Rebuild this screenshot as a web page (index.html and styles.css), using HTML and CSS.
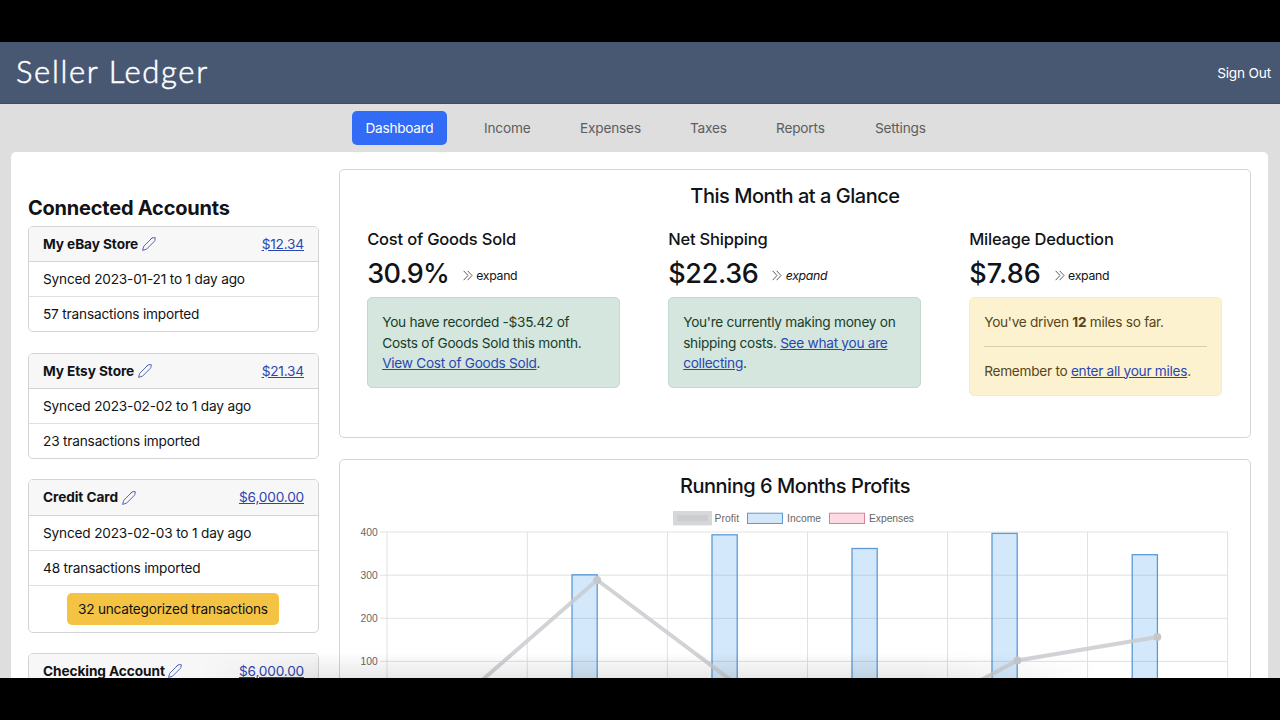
FILE: index.html
```html
<!DOCTYPE html>
<html lang="en">
<head>
<meta charset="utf-8">
<title>Seller Ledger</title>
<link rel="stylesheet" href="styles.css">
</head>
<body>
<svg class="defs" width="0" height="0">
  <symbol id="pen" viewBox="0 0 14 14">
    <path d="M.6 13.4 1.7 9.3 9.6 1.4Q10.2.7 11.2.7H13.3L13 2.8Q12.9 3.8 12.3 4.4L4.5 12.2ZM8 2.8 10.4.8"/>
  </symbol>
  <symbol id="chev" viewBox="0 0 10 11">
    <path d="M.6.8 5 5.5.6 10.2M4.6.8 9 5.5 4.6 10.2"/>
  </symbol>
</svg>
<div class="screen">
  <header class="topbar"><a class="brand">Seller Ledger</a><a class="signout">Sign Out</a></header>
  <nav class="nav">
    <a class="tab active">Dashboard</a><a class="tab t2">Income</a><a class="tab t3">Expenses</a><a class="tab t4">Taxes</a><a class="tab t5">Reports</a><a class="tab t6">Settings</a>
  </nav>
  <main class="page">
    <aside class="side">
      <h2 class="side-title">Connected Accounts</h2>
      <section class="card">
        <div class="card-head"><b>My eBay Store</b><svg class="pen"><use href="#pen"/></svg><a class="amount">$12.34</a></div>
        <div class="row">Synced 2023-01-21 to 1 day ago</div>
        <div class="row">57 transactions imported</div>
      </section>
      <section class="card">
        <div class="card-head"><b>My Etsy Store</b><svg class="pen"><use href="#pen"/></svg><a class="amount">$21.34</a></div>
        <div class="row">Synced 2023-02-02 to 1 day ago</div>
        <div class="row">23 transactions imported</div>
      </section>
      <section class="card">
        <div class="card-head"><b>Credit Card</b><svg class="pen"><use href="#pen"/></svg><a class="amount">$6,000.00</a></div>
        <div class="row">Synced 2023-02-03 to 1 day ago</div>
        <div class="row">48 transactions imported</div>
        <div class="row action"><span class="button">32 uncategorized transactions</span></div>
      </section>
      <section class="card">
        <div class="card-head"><b>Checking Account</b><svg class="pen"><use href="#pen"/></svg><a class="amount">$6,000.00</a></div>
        <div class="row">&nbsp;</div>
      </section>
    </aside>
    <div class="content">
      <section class="panel glance">
        <h3 class="panel-title">This Month at a Glance</h3>
        <div class="stats">
          <div class="stat">
            <h4 class="stat-name">Cost of Goods Sold</h4>
            <div class="stat-line"><span class="value tight">30.9%</span><svg class="chev"><use href="#chev"/></svg><span class="expand">expand</span></div>
            <div class="alert green">You have recorded -$35.42 of<br>Costs of Goods Sold this month.<br><a>View Cost of Goods Sold</a>.</div>
          </div>
          <div class="stat">
            <h4 class="stat-name">Net Shipping</h4>
            <div class="stat-line"><span class="value">$22.36</span><svg class="chev"><use href="#chev"/></svg><span class="expand italic">expand</span></div>
            <div class="alert green">You're currently making money on<br>shipping costs. <a>See what you are<br>collecting</a>.</div>
          </div>
          <div class="stat">
            <h4 class="stat-name">Mileage Deduction</h4>
            <div class="stat-line"><span class="value loose">$7.86</span><svg class="chev"><use href="#chev"/></svg><span class="expand">expand</span></div>
            <div class="alert yellow">You've driven <b>12</b> miles so far.<hr>Remember to <a>enter all your miles</a>.</div>
          </div>
        </div>
      </section>
      <section class="panel profits">
        <h3 class="panel-title">Running 6 Months Profits</h3>
        <svg class="chart" viewBox="340 505 910 185">
          <g class="grid">
            <path d="M380 532H1228M380 575.2H1228M380 618.3H1228M380 661.4H1228"/>
            <path d="M387 532V690M527.3 532V690M667.4 532V690M807.5 532V690M947.5 532V690M1087.5 532V690M1227.6 532V690"/>
          </g>
          <g class="bars">
            <rect x="572" y="574.8" width="25.2" height="130"/>
            <rect x="712" y="534.8" width="25.2" height="170"/>
            <rect x="852" y="548.5" width="25.2" height="150"/>
            <rect x="992" y="533.4" width="25.2" height="170"/>
            <rect x="1132.2" y="554.7" width="25.2" height="150"/>
          </g>
          <polyline class="line" points="457,702 597.2,580 737.3,685 877.3,736 1017.3,660.5 1157.4,637"/>
          <g class="dots"><circle cx="597.2" cy="580" r="3.6"/><circle cx="1017.3" cy="660.5" r="3.6"/><circle cx="1157.4" cy="637" r="3.6"/></g>
          <rect class="key profit" x="675" y="513" width="35" height="10.4"/>
          <rect class="key income" x="747.5" y="513.2" width="35" height="10.3"/>
          <rect class="key expense" x="829.5" y="513.2" width="35" height="10.3"/>
          <g class="label">
            <text x="714.5" y="522" textLength="24.5">Profit</text>
            <text x="787" y="522" textLength="34">Income</text>
            <text x="869" y="522" textLength="45">Expenses</text>
            <text x="360.5" y="535.6" textLength="17.2">400</text>
            <text x="360.5" y="578.7" textLength="17.2">300</text>
            <text x="360.5" y="621.8" textLength="17.2">200</text>
            <text x="360.5" y="664.9" textLength="17.2">100</text>
          </g>
        </svg>
      </section>
    </div>
  </main>
  <div class="shade"></div>
</div>
</body>
</html>
```
FILE: styles.css
```css
* { box-sizing: border-box; }
body { margin: 0; background: #000; height: 720px; overflow: hidden; padding-top: 42px; font-family: Inter, sans-serif; font-size: 13.67px; line-height: 20.5px; letter-spacing: -.19px; color: #111316; }
.defs { position: absolute; }
.screen { height: 636px; overflow: hidden; position: relative; background: #dedede; }
.topbar { height: 62px; background: #485873; border-bottom: 1px solid #3d4c68; display: flex; align-items: center; justify-content: space-between; padding: 0 9px 0 16px; color: #fff; }
.brand { font: 300 31px/40px Lato, sans-serif; letter-spacing: 1.65px; -webkit-text-stroke: .55px #fff; padding-bottom: 4px; }
.signout { padding-top: 1px; }
.nav { height: 48px; display: flex; align-items: center; padding-left: 352px; color: #5d5d5d; }
.tab { white-space: nowrap; }
.active { background: #326bf6; color: #fff; width: 95px; height: 34px; line-height: 34px; text-align: center; border-radius: 5px; letter-spacing: -.28px; }
.t2 { margin-left: 37px; width: 96px; }
.t3 { width: 110px; }
.t4 { width: 86px; }
.t5 { width: 99px; }
.page { margin: 0 12px 0 11px; height: 700px; background: #fff; border-radius: 5px; display: flex; padding: 17px 17px 0; }
.side { width: 291px; margin-right: 20px; flex: none; }
.side-title { margin: 27px 0 6px; font-size: 20px; line-height: 24px; font-weight: 700; letter-spacing: -.22px; }
.card { border: 1px solid #d3d4d5; border-radius: 5px; margin-bottom: 20.3px; overflow: hidden; }
.card-head { height: 34.4px; background: #f7f7f7; padding: 0 14px; display: flex; align-items: center; }
.card-head b { font-weight: 650; letter-spacing: -.08px; }
.pen { width: 14px; height: 14px; margin-left: 3.5px; fill: none; stroke: #4356ad; stroke-width: .9; }
.amount { margin-left: auto; }
a.amount, .alert a { color: #2b46b0; text-decoration: underline; }
.row { height: 35px; border-top: 1px solid #d3d4d5; padding: 6.8px 14px; white-space: nowrap; }
.row + .row { border-color: #e0e0e1; }
.action { height: 47px; text-align: center; padding: 7px 14px; }
.button { display: block; width: 212px; height: 32.5px; margin: 0 auto; line-height: 32px; background: #f5c344; border-radius: 5px; color: #111; letter-spacing: -.24px; position: relative; left: -.6px; }
.content { width: 912px; flex: none; }
.panel { border: 1px solid #d3d4d5; border-radius: 5px; }
.glance { height: 269px; margin-bottom: 20.5px; padding-top: 14px; }
.profits { height: 400px; padding-top: 14px; }
.panel-title { margin: 0; text-align: center; font-size: 20px; line-height: 25px; font-weight: 500; letter-spacing: -.47px; }
.stats { display: flex; gap: 48px; padding: 20px 0 0 27.2px; }
.stat { width: 253px; flex: none; white-space: nowrap; }
.stat-name { margin: 0; font-size: 16.5px; line-height: 21px; font-weight: 500; letter-spacing: -.2px; }
.stat-line { display: flex; align-items: center; height: 44px; padding-top: 4px; }
.value { font-size: 27px; font-weight: 500; letter-spacing: -.3px; }
.tight { letter-spacing: -.7px; }
.loose { letter-spacing: .15px; }
.chev { width: 10px; height: 11px; margin: 3.5px 3.5px 0 13.6px; fill: none; stroke: #333; stroke-width: .8; }
.expand { font-size: 12.3px; margin-top: 4px; letter-spacing: -.3px; }
.italic { font-style: italic; }
.alert { border: 1px solid; border-radius: 5px; padding: 14.2px 14px 13.4px; margin-top: 3px; letter-spacing: -.28px; }
.green { background: #d4e6de; border-color: #c3dacf; color: #183e2a; }
.yellow { background: #fdf2d0; border-color: #fbecc0; color: #564619; }
.alert hr { border: 0; border-top: 1px solid #d9cdaa; margin: 13.5px 0; }
.chart { display: block; width: 910px; height: 185px; margin-top: 6px; }
.grid { stroke: #e1e1e1; stroke-width: 1; fill: none; }
.bars { fill: rgba(54,150,230,.22); stroke: #5b9bd5; stroke-width: 1.3; }
.line { fill: none; stroke: #c9cbcf; stroke-opacity: .85; stroke-width: 4; }
.dots { fill: #c5c7cb; stroke: #c5c7cb; stroke-width: 1; }
.key { stroke-width: 1; }
.profit { fill: #cccdd0; stroke: #d6d7d9; stroke-width: 4; }
.income { fill: #d3e7f8; stroke: #5b9bd5; }
.expense { fill: #fcdae1; stroke: #dc8198; }
.label { font: 10.3px "Liberation Sans", sans-serif; letter-spacing: 0; fill: #666; }
.shade { position: absolute; left: 200px; width: 900px; bottom: 0; height: 26px; background: linear-gradient(to bottom, rgba(0,0,0,0), rgba(0,0,0,.09)); -webkit-mask-image: linear-gradient(to right, transparent, #000 14%, #000 80%, transparent); mask-image: linear-gradient(to right, transparent, #000 14%, #000 80%, transparent); }
```
